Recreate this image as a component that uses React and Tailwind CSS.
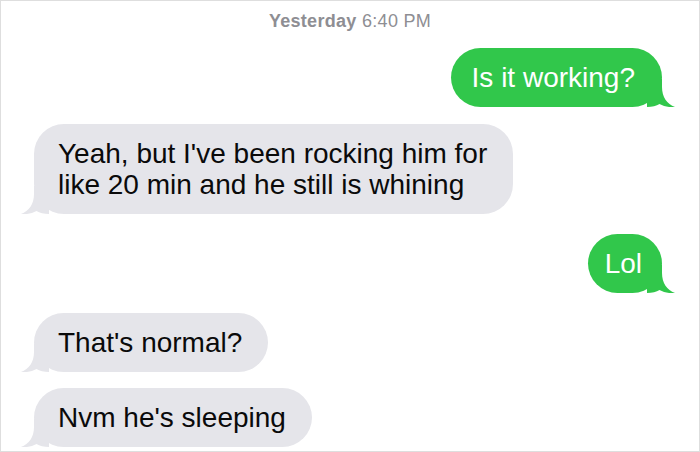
import React from 'react';

const font = { fontFamily: '"Liberation Sans", Arial, sans-serif' };

function Tail({ side, color }) {
  // tail drawn for the right side; mirrored for the left one
  const pos = side === 'right' ? 'right-[-13px]' : 'left-[-13px] -scale-x-100';
  return (
    <svg
      className={`absolute bottom-0 ${pos}`}
      width="28"
      height="28"
      viewBox="0 0 28 28"
    >
      <path
        d="M0 0 L15 0 L15 8 C15 18 20 25 28 28 C22 28.6 17 27.4 12.5 25 C9.5 27 5 28 0 28 Z"
        fill={color}
      />
    </svg>
  );
}

function Bubble({ side, children, className = '', pad }) {
  const isMe = side === 'right';
  const color = isMe ? '#31c74b' : '#e5e5ea';
  const padding = pad || (isMe ? 'pl-[21px] pr-[27px]' : 'pl-[24px] pr-[26px]');
  return (
    <div className={`flex ${isMe ? 'justify-end pr-[37px]' : 'justify-start pl-[33px]'} ${className}`}>
      <div
        className={`relative rounded-[30px] py-[14px] text-[28px] leading-[31px] ${padding} ${
          isMe ? 'bg-[#31c74b] text-white' : 'bg-[#e5e5ea] text-[#0a0a0a]'
        }`}
      >
        <Tail side={side} color={color} />
        <span className="relative">{children}</span>
      </div>
    </div>
  );
}

export default function App() {
  return (
    <div
      className="w-[700px] h-[452px] bg-white border border-[#dedede] overflow-hidden flex flex-col"
      style={font}
    >
      <div className="pt-[10px] text-center text-[18px] leading-[20px] tracking-[0.3px] text-[#8e8e93]">
        <span className="font-bold">Yesterday</span> 6:40 PM
      </div>

      <Bubble side="right" className="mt-[17px]">Is it working?</Bubble>

      <Bubble side="left" className="mt-[17px]">
        Yeah, but I've been rocking him for
        <br />
        like 20 min and he still is whining
      </Bubble>

      <Bubble side="right" className="mt-[20px] pr-[34px]" pad="pl-[17px] pr-[20px]">Lol</Bubble>

      <Bubble side="left" className="mt-[20px]">That's normal?</Bubble>

      <Bubble side="left" className="mt-[16px]">Nvm he's sleeping</Bubble>
    </div>
  );
}
